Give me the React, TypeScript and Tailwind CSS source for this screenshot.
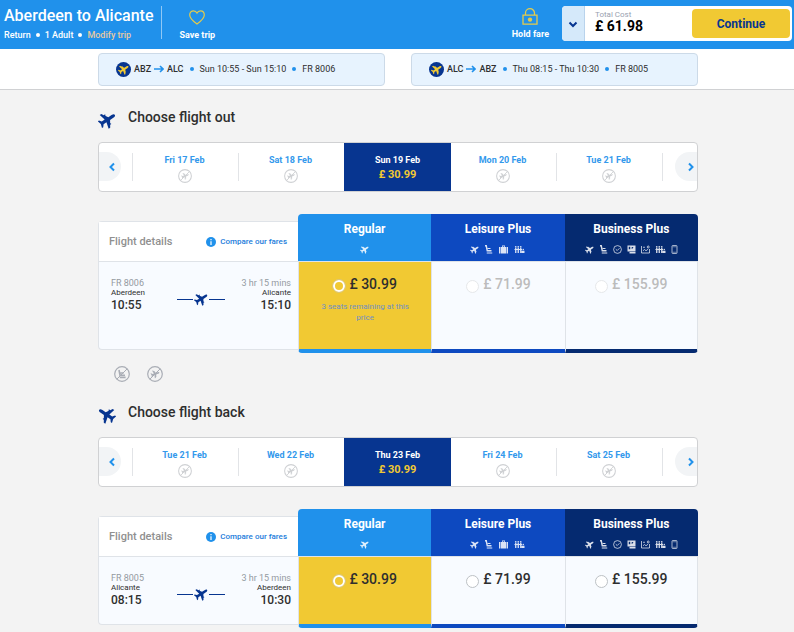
import React, { useState } from 'react';
import clsx from 'clsx';

type IconProps = { className?: string };

interface FareDay {
  label: string;
  price?: string;
}

interface Fare {
  name: string;
  price: string;
  note?: string;
}

interface Leg {
  id: string;
  title: string;
  flight: string;
  duration: string;
  from: string;
  to: string;
  departs: string;
  arrives: string;
  days: FareDay[];
  fares: Fare[];
  locked?: boolean;
}

const PLANE =
  'M23.500 12c0-1.100-1.500-2-3.600-2h-4.700l-2.300-3.700h.8V4.900h-1.700L10.200 2H7.900l2 8H5.700L3.400 7.200H1.600L3 12l-1.400 4.800h1.800L5.700 14h4.200l-2 8h2.300l1.800-2.900h1.700v-1.400h-.8l2.300-3.700h4.700c2.100 0 3.600-.9 3.600-2z';

function PlaneIcon({ className, angle = -33 }: IconProps & { angle?: number }) {
  return (
    <svg viewBox="1 1 22 22" className={className} fill="currentColor" aria-hidden="true">
      <path d={PLANE} transform={`rotate(${angle} 12 12)`} />
    </svg>
  );
}

function NoFlightIcon({ className }: IconProps) {
  return (
    <svg viewBox="0 0 16 16" className={className} fill="none" stroke="currentColor" aria-hidden="true">
      <circle cx="8" cy="8" r="7.3" strokeWidth="1.2" />
      <path d={PLANE} transform="translate(3.2 3.2) scale(.4) rotate(-20 12 12)" fill="currentColor" stroke="none" />
      <path d="M2.800 13.200 13.200 2.800" strokeWidth="1" />
    </svg>
  );
}

function NoSeatIcon({ className }: IconProps) {
  return (
    <svg viewBox="0 0 16 16" className={className} fill="none" stroke="currentColor" aria-hidden="true">
      <circle cx="8" cy="8" r="7.3" strokeWidth="1.2" />
      <path d="M5 4 6 9.200h5M6.400 7h3.200M5.800 11.400h5.800" strokeWidth="1.600" />
      <path d="M2.800 13.200 13.200 2.800" strokeWidth="1" />
    </svg>
  );
}

function SeatIcon({ className }: IconProps) {
  return (
    <svg viewBox="0 0 16 18" className={className} fill="none" stroke="currentColor" aria-hidden="true">
      <path d="M1 1.500h2.500L5.500 11.500H14" strokeWidth="2.800" />
      <path d="M6 7h6M4.500 16h11" strokeWidth="2" />
    </svg>
  );
}

function BagIcon({ className }: IconProps) {
  return (
    <svg viewBox="0 0 18 18" className={className} fill="currentColor" aria-hidden="true">
      <path d="M0 4h2.500v13H0zM3.500 4H6V1h6v3h2.500v13h-11zm4 0h3V2.500h-3zM15.500 4H18v13h-2.500z" fillRule="evenodd" />
    </svg>
  );
}

function FamilyIcon({ className }: IconProps) {
  return (
    <svg viewBox="0 0 20 18" className={className} fill="currentColor" aria-hidden="true">
      <circle cx="2.500" cy="3.500" r="1.700" />
      <circle cx="7.500" cy="3.500" r="1.700" />
      <circle cx="12.500" cy="3.500" r="1.700" />
      <circle cx="17.500" cy="9" r="1.500" />
      <path d="M1.200 5.500h2.600V16H1.200zM6.200 5.500h2.600V16H6.200zM11.200 5.500h2.600V16h-2.600zM0 8h15v2.200H0zM14 11.500h6V16h-6z" />
    </svg>
  );
}

function ClockIcon({ className }: IconProps) {
  return (
    <svg viewBox="0 0 18 18" className={className} fill="none" stroke="currentColor" strokeWidth="1.600" aria-hidden="true">
      <circle cx="9" cy="9" r="7.800" />
      <path d="m5.500 8.500 3 2.500 4.500-4.500" />
    </svg>
  );
}

function PassIcon({ className }: IconProps) {
  return (
    <svg viewBox="0 0 16 18" className={className} fill="currentColor" aria-hidden="true">
      <path d="M0 1h16v12H0zm2.500 2.500v5h3v-5zM7.500 4l2 2-2 2h1.800L12 4z" fillRule="evenodd" />
      <path d="M4 14h12v3H4z" />
    </svg>
  );
}

function LoungeIcon({ className }: IconProps) {
  return (
    <svg viewBox="0 0 18 18" className={className} fill="none" stroke="currentColor" strokeWidth="1.600" aria-hidden="true">
      <path d="M1 2v14h16V8M4 11.500l3-2.500 3 2.500 4-3" />
      <path d="M4 4.500h4" />
      <circle cx="14.500" cy="4" r="2" />
    </svg>
  );
}

function PhoneIcon({ className }: IconProps) {
  return (
    <svg viewBox="0 0 12 18" className={className} fill="none" stroke="currentColor" strokeWidth="1.500" aria-hidden="true">
      <rect x="1" y="1" width="10" height="16" rx="1.500" />
      <path d="M2 3.500h8M2 14.500h8" strokeWidth="1" />
    </svg>
  );
}

function HeartIcon({ className }: IconProps) {
  return (
    <svg viewBox="0 0 16 15" className={className} fill="none" stroke="currentColor" strokeWidth="1.200" aria-hidden="true">
      <path d="M8 14C4.500 11.500.7 8.500.7 5 .7 2.500 2.400.8 4.500.8 6 .8 7.300 1.600 8 3 8.700 1.600 10 .8 11.500.8c2.100 0 3.800 1.700 3.800 4.200 0 3.500-3.800 6.500-7.300 9z" />
    </svg>
  );
}

function LockIcon({ className }: IconProps) {
  return (
    <svg viewBox="0 0 16 17" className={className} fill="none" stroke="currentColor" strokeWidth="1.300" aria-hidden="true">
      <path d="M3.500 7V5a4.500 4.300 0 0 1 9 0v2M1 7.200h14v9H1z" />
      <circle cx="8" cy="11.600" r="2.200" fill="currentColor" stroke="none" />
    </svg>
  );
}

function Chevron({ className, d }: IconProps & { d: string }) {
  return (
    <svg viewBox="0 0 10 10" className={className} fill="none" stroke="currentColor" strokeWidth="2" aria-hidden="true">
      <path d={d} />
    </svg>
  );
}

const LEGS: Leg[] = [
  {
    id: 'out',
    title: 'Choose flight out',
    flight: 'FR 8006',
    duration: '3 hr 15 mins',
    from: 'Aberdeen',
    to: 'Alicante',
    departs: '10:55',
    arrives: '15:10',
    days: [
      { label: 'Fri 17 Feb' },
      { label: 'Sat 18 Feb' },
      { label: 'Sun 19 Feb', price: '£ 30.99' },
      { label: 'Mon 20 Feb' },
      { label: 'Tue 21 Feb' },
    ],
    fares: [
      { name: 'Regular', price: '£ 30.99', note: '3 seats remaining at this price' },
      { name: 'Leisure Plus', price: '£ 71.99' },
      { name: 'Business Plus', price: '£ 155.99' },
    ],
    locked: true,
  },
  {
    id: 'back',
    title: 'Choose flight back',
    flight: 'FR 8005',
    duration: '3 hr 15 mins',
    from: 'Alicante',
    to: 'Aberdeen',
    departs: '08:15',
    arrives: '10:30',
    days: [
      { label: 'Tue 21 Feb' },
      { label: 'Wed 22 Feb' },
      { label: 'Thu 23 Feb', price: '£ 30.99' },
      { label: 'Fri 24 Feb' },
      { label: 'Sat 25 Feb' },
    ],
    fares: [
      { name: 'Regular', price: '£ 30.99' },
      { name: 'Leisure Plus', price: '£ 71.99' },
      { name: 'Business Plus', price: '£ 155.99' },
    ],
  },
];

const FARE_STYLES = [
  { head: 'bg-[#2091eb] rounded-tl-sm', foot: 'border-b-[#2091eb] rounded-bl-sm' },
  { head: 'bg-[#0d49c0]', foot: 'border-b-[#0d49c0]' },
  { head: 'bg-[#052a70] rounded-tr-sm', foot: 'border-b-[#052a70] border-r rounded-br-sm' },
];

function FarePerks({ fare }: { fare: number }) {
  return (
    <div className="flex h-[9px] justify-center gap-[5px] text-white/85">
      <PlaneIcon className="size-[9px]" />
      {fare > 0 && <SeatIcon className="h-[9px] w-[9px]" />}
      {fare === 1 && <BagIcon className="h-[9px] w-[11px]" />}
      {fare === 2 && (
        <>
          <ClockIcon className="h-[9px] w-[9px]" />
          <PassIcon className="h-[9px] w-[9px]" />
          <LoungeIcon className="h-[9px] w-[9px]" />
        </>
      )}
      {fare > 0 && <FamilyIcon className="h-[9px] w-[11px]" />}
      {fare === 2 && <PhoneIcon className="h-[9px] w-[7px]" />}
    </div>
  );
}

function Dot({ className }: IconProps) {
  return <span className={clsx('size-1 rounded-full', className)} />;
}

function TopBar() {
  return (
    <header className="flex h-[49px] items-start bg-[#2091eb] pr-0.5 pl-1 text-white">
      <div className="pt-1.5">
        <h1 className="text-[16px] leading-5 font-medium">Aberdeen to Alicante</h1>
        <div className="mt-0.5 flex items-center gap-[5px] text-[9px] leading-[14px] font-medium">
          <span>Return</span>
          <Dot className="bg-white" />
          <span>1 Adult</span>
          <Dot className="bg-white" />
          <a href="#modify" className="text-[#e8c9a0]">Modify trip</a>
        </div>
      </div>
      <div className="mt-1.5 ml-2 h-[33px] w-px bg-white/50" />
      <button className="mt-2.5 ml-[17px] flex flex-col items-center text-[9px] leading-[14px] font-bold">
        <HeartIcon className="mb-[3px] h-[15px] w-4 text-[#e5cb4b]" />
        Save trip
      </button>
      <button className="mt-2 ml-auto flex flex-col items-center text-[9px] leading-[14px] font-bold">
        <LockIcon className="mb-0.5 h-[17px] w-4 text-[#e5cb4b]" />
        Hold fare
      </button>
      <div className="mt-1.5 ml-[13px] flex h-[35px] w-[230px] overflow-hidden rounded-sm bg-white">
        <button aria-label="Show price breakdown" className="flex w-[23px] items-center justify-center border-r border-[#b9d3ec] bg-[#d5e9fa] text-[#073590]">
          <Chevron className="size-2.5" d="m1.500 3.500 3.500 3.500 3.500-3.500" />
        </button>
        <div className="flex-1 pt-1 pl-2.5">
          <div className="text-[8px] leading-[9px] text-gray-400">Total Cost</div>
          <div className="text-[14px] leading-[14px] font-bold text-black">£ 61.98</div>
        </div>
        <button className="mt-[3px] mr-0.5 h-[29px] w-[98px] rounded-sm bg-[#f1c933] text-[12px] font-bold text-[#073590]">
          Continue
        </button>
      </div>
    </header>
  );
}

interface TripChipProps {
  from: string;
  to: string;
  times: string;
  flight: string;
}

function TripChip({ from, to, times, flight }: TripChipProps) {
  return (
    <div className="flex h-[33px] items-center rounded-sm border border-[#ccdae8] bg-[#e7f3fe] pb-px pl-[17px] text-[9px] leading-[14px] text-[#2e2e2e]">
      <span className="mr-[3px] flex size-[15px] items-center justify-center rounded-full bg-[#073590] text-[#f1c933]">
        <PlaneIcon className="size-[11px]" />
      </span>
      <span className="font-medium">{from}</span>
      <svg viewBox="0 0 10 8" className="mx-[3px] h-2 w-2.5 text-[#2091eb]" fill="none" stroke="currentColor" strokeWidth="1.600" aria-hidden="true">
        <path d="M0 4h9M6 1l3 3-3 3" />
      </svg>
      <span className="font-medium">{to}</span>
      <Dot className="mx-1.5 bg-[#2091eb]" />
      <span>{times}</span>
      <Dot className="mx-1.5 bg-[#2091eb]" />
      <span>{flight}</span>
    </div>
  );
}

function DayCarousel({ days }: { days: FareDay[] }) {
  return (
    <div className="grid h-[50px] grid-cols-[33px_repeat(5,1fr)_35px] overflow-hidden rounded-sm border border-[#d0d1d3] bg-white">
      <button aria-label="Earlier days" className="mt-[9px] flex h-[29px] w-[22px] items-center justify-center rounded-r-full bg-[#f2f4f6] pl-1 text-[#2091eb]">
        <Chevron className="size-2.5" d="M7 1.500 3.500 5 7 8.500" />
      </button>
      {days.map((day) =>
        day.price ? (
          <button key={day.label} className="-mr-px flex flex-col items-center bg-[#073590] pt-2.5 text-[9px] leading-[14px] font-bold text-white">
            {day.label}
            <span className="text-[11px] leading-[15px] font-bold text-[#f1c933]">{day.price}</span>
          </button>
        ) : (
          <button key={day.label} className="mt-2.5 flex h-7 flex-col items-center border-l border-[#e2e4e7] pr-0.5 text-[9px] leading-[14px] font-bold text-[#3399ec] nth-[5]:border-transparent">
            {day.label}
            <NoFlightIcon className="mt-0.5 size-3.5 shrink-0 text-[#cfd1d4]" />
          </button>
        ),
      )}
      <div className="mt-2.5 flex h-7 justify-end border-l border-[#e2e4e7]">
        <button aria-label="Later days" className="-mt-px flex h-[29px] w-[22px] items-center justify-end rounded-l-full bg-[#f2f4f6] pr-px text-[#2091eb]">
          <Chevron className="size-2.5" d="M3 1.500 6.500 5 3 8.500" />
        </button>
      </div>
    </div>
  );
}

function FlightPanel({ leg }: { leg: Leg }) {
  return (
    <div className="mt-[7px] mb-[3px] flex flex-col rounded-l-sm border border-r-0 border-[#dfe3e8] bg-[#f8fbff]">
      <div className="flex h-10 items-center justify-between border-b border-[#dfe3e8] bg-white pr-[11px] pl-2.5">
        <h3 className="text-[11px] leading-[14px] font-medium text-[#909090]">Flight details</h3>
        <a href="#fares" className="flex items-center gap-1 text-[8px] leading-[14px] font-medium text-[#1b7cdb]">
          <svg viewBox="0 0 10 10" className="size-2.5" aria-hidden="true">
            <circle cx="5" cy="5" r="5" fill="#2091eb" />
            <path d="M5 2v1.200M5 4.200V8" stroke="#fff" strokeWidth="1.200" />
          </svg>
          Compare our fares
        </a>
      </div>
      <div className="grid grid-cols-3 items-start pt-4 pr-[7px] pl-3 text-[#2e2e2e]">
        <div>
          <div className="text-[9px] leading-[10px] text-[#949a9f]">{leg.flight}</div>
          <div className="text-[8px] leading-[10px]">{leg.from}</div>
          <div className="text-[12px] leading-[14px] font-medium">{leg.departs}</div>
        </div>
        <div className="mt-3.5 flex items-center justify-center gap-px text-[#073590]">
          <span className="h-px w-4 shrink-0 bg-[#073590]" />
          <PlaneIcon className="size-3.5 shrink-0" />
          <span className="h-px w-4 shrink-0 bg-[#073590]" />
        </div>
        <div className="text-right">
          <div className="text-[9px] leading-[10px] whitespace-nowrap text-[#949a9f]">{leg.duration}</div>
          <div className="text-[8px] leading-[10px]">{leg.to}</div>
          <div className="text-[12px] leading-[14px] font-medium">{leg.arrives}</div>
        </div>
      </div>
    </div>
  );
}

function FareTable({ leg }: { leg: Leg }) {
  const [selected, setSelected] = useState(0);

  return (
    <div className="grid grid-cols-[1fr_2fr]">
      <FlightPanel leg={leg} />
      <div className="grid grid-cols-3">
        {leg.fares.map((fare, i) => {
          const active = i === selected;
          return (
            <div key={fare.name} className="flex flex-col">
              <div className={clsx('h-[47px] pt-2 text-center text-white', FARE_STYLES[i].head)}>
                <h4 className="mb-[9px] text-[12px] leading-[14px] font-bold">{fare.name}</h4>
                <FarePerks fare={i} />
              </div>
              <label
                className={clsx(
                  'min-h-[72px] flex-1 border-t border-b-4 border-l border-t-[#dfe3e8] border-r-[#dfe3e8] border-l-[#dfe3e8] pt-3',
                  FARE_STYLES[i].foot,
                  active ? 'bg-[#f1c933]' : 'bg-[#f8fbff]',
                  leg.locked && !active ? 'text-[#bcbcbc]' : 'text-[#2e2e2e]',
                )}
              >
                <span className="flex justify-center gap-1">
                  <input
                    type="radio"
                    name={leg.id}
                    checked={active}
                    onChange={() => setSelected(i)}
                    className={clsx(
                      'mt-1.5 appearance-none rounded-full',
                      active
                        ? 'size-3 border-2 border-white bg-[#f1c933] outline outline-[#c9c4b0]/60'
                        : 'size-[13px] border bg-white',
                      !active && (leg.locked ? 'border-[#e6e8ea]' : 'border-[#bdc1c5]'),
                    )}
                  />
                  <span className="text-[14px] leading-5 font-medium">{fare.price}</span>
                </span>
                {fare.note && (
                  <span className="mx-auto mt-[7px] mb-[26px] block w-24 text-center text-[8px] leading-[11px] text-[#6f8fc4]">
                    {fare.note}
                  </span>
                )}
              </label>
            </div>
          );
        })}
      </div>
    </div>
  );
}

function LegSection({ leg }: { leg: Leg }) {
  return (
    <section>
      <h2 className="mb-[13px] flex items-end gap-3 text-[14px] leading-6 font-medium text-[#2e2e2e]">
        <PlaneIcon className="size-[18px] text-[#073590]" angle={leg.id === 'out' ? -33 : -147} />
        {leg.title}
      </h2>
      <DayCarousel days={leg.days} />
      <div className="mt-[22px]">
        <FareTable leg={leg} />
      </div>
    </section>
  );
}

export default function App() {
  return (
    <div className="min-h-screen bg-[#f3f3f3] font-['Roboto',sans-serif]">
      <TopBar />
      <div className="grid grid-cols-2 gap-[26px] border-b border-[#d0d1d3] bg-white pt-1 pr-24 pb-[3px] pl-24.5">
        <TripChip from="ABZ" to="ALC" times="Sun 10:55 - Sun 15:10" flight="FR 8006" />
        <TripChip from="ALC" to="ABZ" times="Thu 08:15 - Thu 10:30" flight="FR 8005" />
      </div>
      <main className="pt-[15px] pr-24 pl-24.5">
        <LegSection leg={LEGS[0]} />
        {/* Restrictions on the outbound flight */}
        <div className="mt-[13px] mb-[18px] flex gap-[17px] pl-4 text-[#a9adb5]">
          <NoSeatIcon className="size-4" />
          <NoFlightIcon className="size-4" />
        </div>
        <LegSection leg={LEGS[1]} />
      </main>
    </div>
  );
}
